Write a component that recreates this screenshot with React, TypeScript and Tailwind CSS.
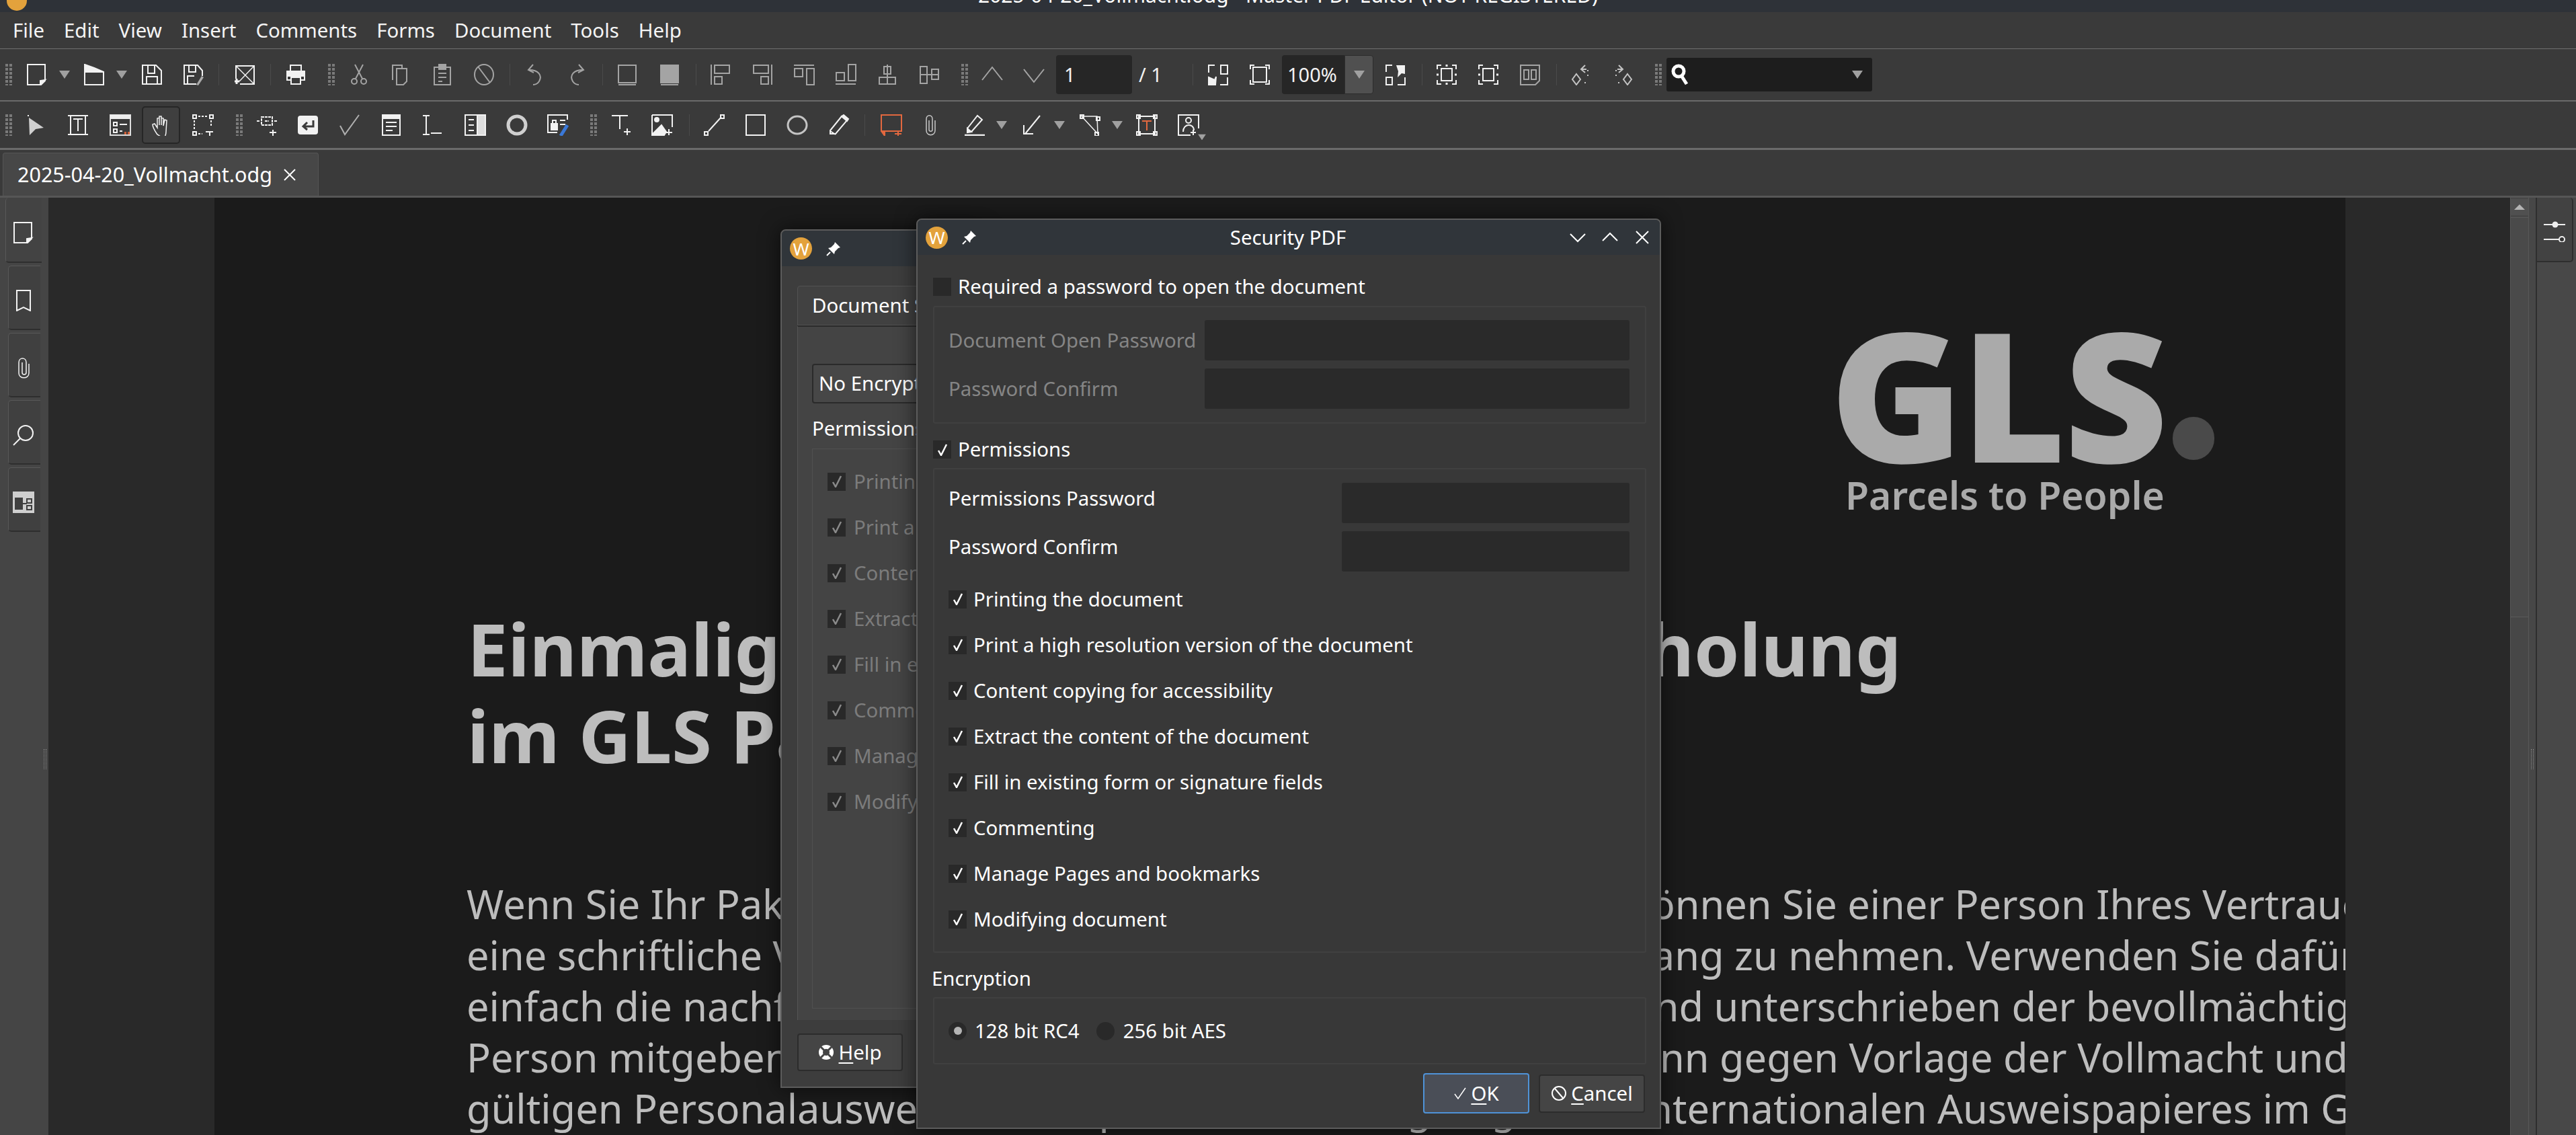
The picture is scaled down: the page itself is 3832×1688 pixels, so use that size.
import type { ReactNode } from "react";

const I = ({ className = "", children }: { className?: string; children: ReactNode }) => (
  <svg
    viewBox="0 0 32 32"
    fill="none"
    stroke="currentColor"
    strokeWidth="2"
    className={"w-8 h-8 shrink-0 " + className}
  >
    {children}
  </svg>
);

const Caret = ({ className = "" }: { className?: string }) => (
  <svg viewBox="0 0 16 12" className={"w-4 h-3 shrink-0 text-[#a0a0a0] " + className}>
    <path d="M0 0h16L8 12z" fill="currentColor" />
  </svg>
);

const Grip = ({ className = "" }: { className?: string }) => (
  <svg viewBox="0 0 10 32" className={"w-[10px] h-8 shrink-0 " + className}>
    <path d="M2 0v32M8 0v32" stroke="#7a7a7a" strokeWidth="4" strokeDasharray="4 2" />
  </svg>
);

const Sep = ({ className = "" }: { className?: string }) => (
  <div className={"w-px h-8 shrink-0 bg-[#4a4a4a] " + className} />
);

const WLogo = ({ className = "" }: { className?: string }) => (
  <div
    className={
      "w-[33px] h-[33px] rounded-full bg-[#e3a23c] flex items-center justify-center text-white text-[26px] leading-none shrink-0 " +
      className
    }
  >
    W
  </div>
);

const Pin = ({ className = "" }: { className?: string }) => (
  <svg viewBox="0 0 24 24" className={"w-6 h-6 shrink-0 text-white " + className}>
    <path d="M14 2l8 8-3 1-5 5-1 4-9-9 4-1 5-5z" fill="currentColor" />
    <path d="M7 17l-5 5" stroke="currentColor" strokeWidth="2" />
  </svg>
);

const CheckBox = ({ checked = false, dim = false }: { checked?: boolean; dim?: boolean }) => (
  <div className="w-[27px] h-[27px] bg-[#292929] flex items-center justify-center shrink-0">
    {checked && (
      <svg viewBox="0 0 16 18" className={dim ? "w-4 h-[18px] text-[#8a8a8a]" : "w-4 h-[18px] text-white"}>
        <path d="M2 10l4 7L14 1" fill="none" stroke="currentColor" strokeWidth="2.5" />
      </svg>
    )}
  </div>
);

const CheckRow = ({ label }: { label: string }) => (
  <div className="h-[68px] flex items-center gap-[10px]">
    <CheckBox checked />
    <span>{label}</span>
  </div>
);

const BackRow = ({ label }: { label: string }) => (
  <div className="h-[68px] flex items-center gap-[12px] text-[#7c7c7c] whitespace-nowrap">
    <CheckBox checked dim />
    <span>{label}</span>
  </div>
);

const Input = ({ className = "" }: { className?: string }) => (
  <div className={"h-[60px] bg-[#2a2a2a] rounded-[3px] " + className} />
);

// left part runs under the dialogs, right part comes out on the other side
const pageLines = [
  { left: "Wenn Sie Ihr Paket nicht persönlich abholen können,", right: "können Sie einer Person Ihres Vertrauens", cls: "ml-[630px]" },
  { left: "eine schriftliche Vollmacht erteilen, das Paket in", right: "Empfang zu nehmen. Verwenden Sie dafür", cls: "ml-[518px]" },
  { left: "einfach die nachfolgende Vorlage, die Sie ausfüllen", right: "und unterschrieben der bevollmächtigten", cls: "ml-[630px]" },
  { left: "Person mitgeben. Diese erhält das Paket", right: "dann gegen Vorlage der Vollmacht und", cls: "ml-[605px]" },
  { left: "gültigen Personalausweises Reisepasses oder mit gültigem", right: "internationalen Ausweispapieres im GLS", cls: "ml-[642px]" },
];

const permissions = [
  "Printing the document",
  "Print a high resolution version of the document",
  "Content copying for accessibility",
  "Extract the content of the document",
  "Fill in existing form or signature fields",
  "Commenting",
  "Manage Pages and bookmarks",
  "Modifying document",
];

const ToolbarOne = () => (
  <div className="h-[78px] flex items-center pl-2 text-[#f2f2f2] border-b-2 border-[#6b6b6b] bg-[#3a3a3a]">
    <Grip />
    <I className="ml-5"><path d="M3 1h26v24l-6 6H3z" /><path d="M29 24l-7 1v6z" fill="currentColor" /></I>
    <Caret className="ml-[18px]" />
    <I className="ml-5"><path d="M2 31V12h28v19z" /><path d="M2 1l14 5 14 6H2z" fill="currentColor" /></I>
    <Caret className="ml-[17px]" />
    <I className="ml-[21px]"><path d="M2 2h20l8 8v20H2z" /><path d="M10 2v12h10V2M8 30V19h16v11" /></I>
    <I className="ml-[30px]"><path d="M20 30H2V2h20l7 8v8" /><path d="M9 2v10h10V2M7 30V18h10" /><path d="M20 31l8-13 3 2-8 12z" fill="#aaa" stroke="none" /></I>
    <Sep className="ml-[21px]" />
    <I className="ml-[22px]"><path d="M3 22V3h27v27H9" /><path d="M3 3l27 27M30 3L8 26" strokeWidth="1.5" /><path d="M1 26h7M4 22v8" strokeWidth="3" /></I>
    <Sep className="ml-[22px]" />
    <I className="ml-[21px]"><path d="M8 11V2h16v9M8 24H3V11h26v13h-5" fill="none" /><path d="M3 12h26v6H3z" fill="currentColor" /><path d="M9 20h14v10H9z" /></I>
    <Grip className="ml-8" />
    <div className="flex items-center text-[#a4a4a4]">
      <I className="ml-5"><circle cx="9" cy="26" r="4" /><circle cx="23" cy="26" r="4" /><path d="M11 22L22 1M21 22L10 1" /></I>
      <I className="ml-[29px]"><path d="M5 24V2h14v5" /><path d="M11 7h15v19l-5 5H11z" /></I>
      <I className="ml-[31px]"><path d="M4 5h24v26H4z" /><path d="M11 1h10v7H11z" fill="currentColor" /><path d="M10 14h12M10 20h12M10 26h6" /></I>
      <I className="ml-[30px]"><ellipse cx="16" cy="16" rx="14" ry="15" /><path d="M7 4l18 24" /></I>
      <Sep className="ml-[22px]" />
      <I className="ml-[21px]"><path d="M13 1L6 9l8 4" /><path d="M7 9c14 0 20 8 15 17-2 3-5 5-9 5" /></I>
      <I className="ml-[30px]"><path d="M19 1l7 8-8 4" /><path d="M25 9c-14 0-20 8-15 17 2 3 5 5 9 5" /></I>
      <Sep className="ml-[22px]" />
      <I className="ml-5"><path d="M3 2h26v26H3zM3 31h26" /></I>
      <I className="ml-[31px]"><path d="M3 2h26v26H3z" fill="currentColor" /><path d="M3 31h26" /></I>
      <Sep className="ml-[23px]" />
      <I className="ml-5"><path d="M2 1v30M7 2h22v12H7zM7 19h11v11H7z" /></I>
      <I className="ml-[30px]"><path d="M30 1v30M3 2h22v12H3zM14 19h11v11H14z" /></I>
      <I className="ml-[30px]"><path d="M1 2h30M2 7h12v12H2zM20 7h11v24H20z" /></I>
      <I className="ml-[30px]"><path d="M1 30h30M2 13h12v12H2zM20 1h11v24H20z" /></I>
      <I className="ml-[30px]"><path d="M16 1v30M11 4h10v11H11zM4 20h24v10H4z" /></I>
      <I className="ml-[30px]"><path d="M2 16h28M3 4h10v25H3zM20 8h10v15H20z" /></I>
      <Grip className="ml-8" />
      <I className="ml-5"><path d="M1 24L16 5l15 19" /></I>
      <I className="ml-[30px]"><path d="M1 8l15 19L31 8" /></I>
    </div>
    <div className="ml-[17px] w-[113px] h-[58px] rounded-[4px] bg-[#262626] flex items-center pl-[12px] text-[29px]">1</div>
    <span className="ml-[10px] w-[33px] text-[29px] whitespace-nowrap">/ 1</span>
    <Sep className="ml-[47px]" />
    <I className="ml-[21px]"><path d="M2 13V2h9M30 20v11H19" /><path d="M20 2h10v13H20z" /><path d="M2 20l9 4 2-5-1 12H2z" fill="currentColor" /></I>
    <I className="ml-[30px]"><path d="M2 8V2h6M24 2h6v6M2 24v6h6M24 30h6v-6M6 5h20v22H6z" /></I>
    <div className="ml-[17px] flex h-[58px]">
      <div className="w-[93px] bg-[#262626] rounded-l-[4px] flex items-center pl-2 text-[29px]">100%</div>
      <div className="w-[43px] bg-[#505050] border border-[#2c2c2c] rounded-r-[4px] flex items-center justify-center">
        <Caret />
      </div>
    </div>
    <I className="ml-[17px]"><path d="M2 12V2h9M30 20v11H19" /><path d="M2 20h9v11H2z" /><path d="M17 2h13v13l-5-1-6 6 1-9z" fill="currentColor" stroke="none" /></I>
    <Sep className="ml-[23px]" />
    <I className="ml-5"><path d="M2 8V2h6M24 2h6v6M2 24v6h6M24 30h6v-6M8 7h16v18H8z" /><path d="M16 1v3M16 28v3M1 16h3M28 16h3" strokeWidth="3" /></I>
    <I className="ml-[30px]"><path d="M2 8V2h6M24 2h6v6M2 24v6h6M24 30h6v-6M8 7h16v18H8z" /><path d="M1 16h3M28 16h3" strokeWidth="3" /></I>
    <I className="ml-[30px] text-[#a4a4a4]"><path d="M2 2h28v23l-6 6H2z" /><path d="M7 9h7v14H7zM18 9h7v14h-7z" /></I>
    <Sep className="ml-[23px]" />
    <div className="flex items-center text-[#c4c4c4]">
      <I className="ml-5"><path d="M9 15l6 8-6 8-6-8z" /><path d="M22 2l-6 6 6 5M16 8h8" /><path d="M26 9v14M23 28h-5" strokeDasharray="2 5" /></I>
      <I className="ml-[30px]"><path d="M23 15l6 8-6 8-6-8z" /><path d="M10 2l6 6-6 5M16 8H8" /><path d="M6 9v14M9 28h5" strokeDasharray="2 5" /></I>
    </div>
    <Grip className="ml-8" />
    <div className="ml-[7px] w-[306px] h-[50px] rounded-[3px] bg-[#1d1d1d] flex items-center pl-[6px] pr-[14px] justify-between">
      <svg viewBox="0 0 28 32" className="w-[28px] h-8 text-white">
        <circle cx="12" cy="11" r="8" fill="none" stroke="currentColor" strokeWidth="5" />
        <path d="M17 19l7 11" stroke="currentColor" strokeWidth="5" />
      </svg>
      <Caret />
    </div>
  </div>
);

const ToolbarTwo = () => (
  <div className="h-[72px] flex items-center pl-2 text-[#f2f2f2] border-b-[3px] border-[#6b6b6b] bg-[#3a3a3a]">
    <Grip />
    <I className="ml-5"><path d="M4 1v2" /><path d="M5 5l22 15-12 2-9 9z" fill="#cfcfcf" stroke="none" /></I>
    <I className="ml-[30px]"><path d="M1 2h30M1 30h30M5 2v28M27 2v28M9 7h14M16 7v18" /></I>
    <I className="ml-[31px]"><path d="M1 1h30v30H1z" fill="none" stroke="#ddd" /><path d="M1 1h30v6H1z" fill="#eee" stroke="none" /><path d="M6 12h5v5H6zM6 22h5v5H6zM15 15h11M15 25h4" /><path d="M22 28h3M27 28h3" stroke="#d0623a" strokeWidth="4" /></I>
    <div className="ml-4 w-[57px] h-[56px] rounded-[5px] bg-[#3f3f3f] border-2 border-[#262626] flex items-center justify-center">
      <I><path d="M10 30C6 24 3 20 3 15l3-1 4 6V6l3-1v11-13l3 0v13-11l3 1v11l2-9 3 1-1 17c0 5-2 8-3 10z" strokeWidth="1.5" /></I>
    </div>
    <I className="ml-[18px]"><path d="M1 1h5v5H1zM26 1h5v5h-5zM1 26h5v5H1z" /><path d="M9 3h14M3 9v14M28 9v10M9 29h6" strokeDasharray="3 2" /><path d="M20 26h11M26 26v6" /></I>
    <Grip className="ml-[33px]" />
    <I className="ml-5"><path d="M1 10h4M27 10h4M8 4h16v12H8zM13 10h6" strokeDasharray="4 1" /><path d="M25 23v9M20 27h10" /></I>
    <I className="ml-[29px]"><rect x="1" y="2" width="30" height="28" rx="4" fill="#f2f2f2" stroke="none" /><path d="M24 9v9H10M15 12l-6 6 6 5" stroke="#3a3a3a" strokeWidth="3" /></I>
    <I className="ml-[30px] text-[#b0b0b0]"><path d="M2 17l7 13L30 1" /></I>
    <I className="ml-[30px]"><path d="M3 1h26v30H3z" /><path d="M3 1h26v5H3z" fill="currentColor" /><path d="M8 12h16M8 18h16M8 24h10" /></I>
    <I className="ml-[29px]"><path d="M2 2h10M7 2v28M2 30h10M14 28h16" strokeWidth="2" /></I>
    <I className="ml-8"><path d="M1 1h30v30H1z" /><path d="M19 1h12v30H19z" fill="#ddd" /><path d="M6 8h8M6 16h8M6 24h8" /></I>
    <I className="ml-[30px] text-[#cfcfcf]"><circle cx="16" cy="16" r="13" strokeWidth="5" /></I>
    <I className="ml-[29px]"><path d="M30 8V1H1v26h14" /><path d="M6 14h9v9H6z" fill="currentColor" /><path d="M8 13V9h5v4M19 9h8M19 15h8" /><path d="M20 32l10-16" stroke="#3a78d8" strokeWidth="5" /></I>
    <Grip className="ml-8" />
    <I className="ml-5"><path d="M2 2h24M14 2v20M20 26h10M25 21v10" /></I>
    <I className="ml-[29px]"><path d="M1 1h30v18M1 1v30h18" /><circle cx="8" cy="8" r="3" fill="currentColor" /><path d="M1 30l14-14 7 10-3 5z" fill="currentColor" /><path d="M26 22v9M21 27h10" /></I>
    <Sep className="ml-6" />
    <I className="ml-5"><path d="M8 25L27 4" /><path d="M2 26h5v5H2zM26 1h5v5h-5z" /></I>
    <I className="ml-[30px]"><path d="M2 1h28v30H2z" /></I>
    <I className="ml-[30px] text-[#c4c4c4]"><ellipse cx="16" cy="16" rx="14" ry="13" strokeWidth="3" /></I>
    <I className="ml-[30px]"><path d="M3 24L20 3l8 6-17 20H3z" /><path d="M20 3l3-2 7 6-2 3z" fill="currentColor" /><path d="M3 25l8 5" /></I>
    <Sep className="ml-[22px]" />
    <I className="ml-[23px] text-[#e2683f]"><path d="M1 1h30v24H1z" /><path d="M1 25h5v7z" fill="currentColor" /><path d="M26 25v7M21 29h10" /></I>
    <I className="ml-[27px] text-[#c8c8c8]"><path d="M22 9v15c0 9-13 9-13 0V7c0-7 9-7 9 0v16c0 3-5 3-5 0V9" strokeWidth="1.5" /></I>
    <I className="ml-[33px]"><path d="M5 21L20 2l7 6-16 18H5z" /><path d="M5 21l6 5-6 1z" fill="currentColor" /><path d="M1 31h30" strokeWidth="2.5" /></I>
    <Caret className="ml-4" />
    <I className="ml-5"><path d="M29 2L7 29M5 16v13h14" /></I>
    <Caret className="ml-[18px]" />
    <I className="ml-[22px]"><path d="M3 3h23l1 26zM3 3l24 26" strokeWidth="1.5" /><path d="M1 1h5v5H1zM25 4h5v5h-5zM23 27h5v5h-5z" /></I>
    <Caret className="ml-4" />
    <I className="ml-5"><path d="M3 3h26M3 29h26M4 3v26M28 3v26" /><path d="M1 1h5v5H1zM26 1h5v5h-5zM1 26h5v5H1zM26 26h5v5h-5z" /><path d="M9 10h14M16 10v14" stroke="#e2683f" /></I>
    <div className="ml-[30px] relative w-8 h-8 shrink-0">
      <I><path d="M19 31H1V1h30v20" /><circle cx="16" cy="9" r="4" /><path d="M8 26c0-13 16-13 16-2" /><path d="M23 23v8M19 27h8" /></I>
      <Caret className="absolute -right-[12px] -bottom-[8px] scale-75" />
    </div>
  </div>
);

const BackDialog = () => (
  <div className="absolute left-[1161px] top-[341px] w-[300px] h-[1277px] bg-[#3d3d3d] border-2 border-[#5c5c5c] rounded-t-[8px] overflow-hidden text-[29.4px] text-white shadow-[0_0_30px_rgba(0,0,0,0.6)]">
    <div className="h-[53px] bg-[#30353a] flex items-center pl-[12px] gap-[20px]">
      <WLogo />
      <Pin />
    </div>
    <div className="pl-[23px]">
      <div className="mt-[29px] h-[59px] w-[400px] bg-[#414141] border border-[#525252] rounded-t-[4px] flex items-center pl-[21px]">
        Document Security
      </div>
      <div className="h-[1033px] w-[400px] bg-[#444444] border-t-2 border-[#2a2a2a] border-l border-l-[#555555] pl-[21px] pt-[55px]">
        <div className="h-[59px] bg-[#474747] border-2 border-[#2a2a2a] rounded-[4px] flex items-center pl-[8px] whitespace-nowrap">
          No Encryption
        </div>
        <div className="mt-[15px] whitespace-nowrap">Permissions</div>
        <div className="mt-[8px] h-[833px] border border-[#505050] pl-[22px] pt-[14px]">
          {permissions.map((p) => (
            <BackRow key={p} label={p} />
          ))}
        </div>
      </div>
      <div className="mt-[20px] w-[157px] h-[56px] bg-[#454545] border-2 border-[#2c2c2c] rounded-[4px] flex items-center justify-center gap-[6px]">
        <svg viewBox="0 0 24 24" className="w-6 h-6">
          <circle cx="12" cy="12" r="11" fill="#ffffff" />
          <path d="M4 4l16 16M20 4L4 20" stroke="#454545" strokeWidth="3" />
          <circle cx="12" cy="12" r="5" fill="#454545" />
        </svg>
        <span>
          <span className="underline underline-offset-4">H</span>elp
        </span>
      </div>
    </div>
  </div>
);

const MainDialog = () => (
  <div className="absolute left-[1363px] top-[325px] w-[1108px] h-[1354px] bg-[#383838] border-2 border-[#5c5c5c] rounded-t-[8px] text-[29.4px] text-white shadow-[0_0_30px_rgba(0,0,0,0.6)]">
    <div className="h-[52px] bg-[#30353a] rounded-t-[6px] grid grid-cols-[1fr_auto_1fr] items-center pl-[12px] pr-[14px]">
      <div className="flex items-center gap-[20px]">
        <WLogo />
        <Pin />
      </div>
      <div>Security PDF</div>
      <div className="flex items-center justify-end gap-[24px]">
        <svg viewBox="0 0 24 24" className="w-6 h-6" fill="none" stroke="currentColor" strokeWidth="2"><path d="M1 7l11 11L23 7" /></svg>
        <svg viewBox="0 0 24 24" className="w-6 h-6" fill="none" stroke="currentColor" strokeWidth="2"><path d="M1 17L12 6l11 11" /></svg>
        <svg viewBox="0 0 24 24" className="w-6 h-6" fill="none" stroke="currentColor" strokeWidth="2"><path d="M3 3l18 18M21 3L3 21" /></svg>
      </div>
    </div>
    <div className="pl-[23px] pr-5">
      <div className="mt-[34px] h-[27px] flex items-center gap-[10px]">
        <CheckBox />
        <span>Required a password to open the document</span>
      </div>
      <div className="mt-[15px] h-[175px] border-2 border-[#404040] rounded-[3px] pl-[21px] pr-[23px] pt-[19px] grid grid-cols-[381px_1fr] gap-y-[12px] content-start text-[#858585]">
        <div className="h-[60px] flex items-center whitespace-nowrap">Document Open Password</div>
        <Input />
        <div className="h-[60px] flex items-center">Password Confirm</div>
        <Input />
      </div>
      <div className="mt-[25px] h-[27px] flex items-center gap-[10px]">
        <CheckBox checked />
        <span>Permissions</span>
      </div>
      <div className="mt-[14px] h-[721px] border-2 border-[#404040] rounded-[3px] pl-[21px] pr-[23px] pt-[20px]">
        <div className="grid grid-cols-[585px_1fr] gap-y-[12px]">
          <div className="h-[60px] flex items-center pb-[14px]">Permissions Password</div>
          <Input />
          <div className="h-[60px] flex items-center pb-[14px]">Password Confirm</div>
          <Input />
        </div>
        <div className="mt-[7px]">
          {permissions.map((p) => (
            <CheckRow key={p} label={p} />
          ))}
        </div>
      </div>
      <div className="mt-[18px] -ml-[2px] h-[40px] flex items-center">Encryption</div>
      <div className="mt-2 h-[100px] border-2 border-[#404040] rounded-[3px] pl-[21px] flex items-center">
        <div className="w-[27px] h-[27px] rounded-full bg-[#292929] flex items-center justify-center">
          <div className="w-[12px] h-[12px] rounded-full bg-[#b4b4b4]" />
        </div>
        <span className="ml-[12px]">128 bit RC4</span>
        <div className="ml-[25px] w-[27px] h-[27px] rounded-full bg-[#292929]" />
        <span className="ml-[13px]">256 bit AES</span>
      </div>
      <div className="mt-[13px] mr-[2px] flex justify-end items-center gap-[14px]">
        <div className="w-[158px] h-[60px] bg-[#4a4e57] border-2 border-[#4f93d8] rounded-[4px] flex items-center justify-center gap-[6px]">
          <svg viewBox="0 0 20 20" className="w-5 h-5" fill="none" stroke="currentColor" strokeWidth="1.5"><path d="M2 11l5 7L18 2" /></svg>
          <span><span className="underline underline-offset-4">O</span>K</span>
        </div>
        <div className="w-[158px] h-[57px] bg-[#454545] border-2 border-[#2c2c2c] rounded-[4px] flex items-center justify-center gap-[6px]">
          <svg viewBox="0 0 24 24" className="w-6 h-6" fill="none" stroke="currentColor" strokeWidth="2"><circle cx="12" cy="12" r="10" /><path d="M6 5l12 14" /></svg>
          <span><span className="underline underline-offset-4">C</span>ancel</span>
        </div>
      </div>
    </div>
  </div>
);

const SideTab = ({ first = false, children }: { first?: boolean; children: ReactNode }) => (
  <div
    className={
      first
        ? "w-[54px] h-[97px] ml-2 pt-2 pr-1 bg-[#434343] border-l border-[#585858] border-b-2 border-b-[#2e2e2e] rounded-l-[5px] flex items-center justify-center text-[#f2f2f2]"
        : "w-[48px] h-[96px] ml-3 mt-1 pt-2 pr-1 bg-[#404040] border-l border-t border-[#585858] border-b-2 border-b-[#2e2e2e] rounded-l-[5px] flex items-center justify-center text-[#f2f2f2]"
    }
  >
    {children}
  </div>
);

export default function App() {
  return (
    <div className="relative w-[3832px] h-[1688px] overflow-hidden bg-[#3a3a3a] font-['Noto_Sans',sans-serif] text-white flex flex-col">
      <div className="h-[18px] bg-[#2e3238] shrink-0 relative overflow-hidden flex justify-center items-end">
        <div className="absolute left-[10px] -top-[14px] w-[30px] h-[30px] rounded-full bg-[#e3a23c]" />
        <span className="text-[30px] leading-[30px] mb-[10px] whitespace-nowrap">
          2025-04-20_Vollmacht.odg - Master PDF Editor (NOT REGISTERED)
        </span>
      </div>
      <div className="h-[55px] shrink-0 flex items-center gap-[29px] pl-[19px] border-b border-[#6e6e6e] text-[29.4px] text-[#f4f4f4]">
        <span>File</span>
        <span>Edit</span>
        <span>View</span>
        <span>Insert</span>
        <span>Comments</span>
        <span>Forms</span>
        <span>Document</span>
        <span>Tools</span>
        <span>Help</span>
      </div>
      <ToolbarOne />
      <ToolbarTwo />
      <div className="h-[71px] shrink-0 flex items-end border-b-[3px] border-[#565656] pl-[4px]">
        <div className="w-[470px] h-[64px] bg-[#474747] border border-b-0 border-[#555555] rounded-t-[4px] flex items-center pl-[21px] text-[30.5px] whitespace-nowrap">
          2025-04-20_Vollmacht.odg
          <svg viewBox="0 0 20 20" className="ml-[16px] w-5 h-5" fill="none" stroke="currentColor" strokeWidth="2"><path d="M2 2l16 16M18 2L2 18" /></svg>
        </div>
      </div>
      <div className="flex-1 flex min-h-0">
        <div className="w-[72px] shrink-0 bg-[#454545] flex">
          <div className="w-[62px]">
            <SideTab first>
              <I><path d="M3 1h26v24l-6 6H3z" /><path d="M29 24l-7 1v6z" fill="currentColor" /></I>
            </SideTab>
            <SideTab>
              <I><path d="M6 1h20v30l-10-5-10 5z" /></I>
            </SideTab>
            <SideTab>
              <I><path d="M24 10v14c0 9-15 9-15 0V8c0-8 11-8 11 0v15c0 4-6 4-6 0V8" strokeWidth="1.5" /></I>
            </SideTab>
            <SideTab>
              <I><circle cx="19" cy="13" r="11" /><path d="M11 21L1 31" /></I>
            </SideTab>
            <SideTab>
              <svg viewBox="0 0 32 32" className="w-8 h-8">
                <path d="M0 0h32v32H0z" fill="#cfcfcf" />
                <path d="M3 9h12v18H3z" fill="#404040" />
                <path d="M15 18h6" stroke="#404040" strokeWidth="2" />
                <path d="M21 11h7v6h-7zM21 21h7v6h-7z" fill="none" stroke="#404040" strokeWidth="2" />
              </svg>
            </SideTab>
          </div>
          <div className="w-[10px] pt-[820px] flex justify-center">
            <div className="w-[4px] h-[30px] border-x border-dotted border-[#8a8a8a]" />
          </div>
        </div>
        <div className="w-[3662px] shrink-0 bg-[#292929] pl-[247px] overflow-hidden">
          <div className="w-[3170px] h-full bg-[#1b1b1b] overflow-hidden flex flex-col text-[#bdbdbd]">
            <div className="self-end mr-[190px] mt-[192px] w-[577px]">
              <div className="flex items-end h-[198px]">
                <span className="text-[268px] leading-[198px] font-black tracking-[-3px] text-[#aaaaaa]">GLS</span>
                <div className="ml-[10px] w-[62px] h-[64px] shrink-0 rounded-full bg-[#4a4a4a]" />
              </div>
              <div className="ml-[23px] mt-[17px] text-[57px] leading-[70px] font-semibold text-[#aaaaaa] whitespace-nowrap">
                Parcels to People
              </div>
            </div>
            <div className="ml-[376px] mt-[129px] text-[108px] leading-[129px] font-bold whitespace-nowrap">
              <div>
                <span>Einmalige Vollmacht zur</span>
                <span className="ml-[311px]">Abholung</span>
              </div>
              <div>im GLS PaketShop</div>
            </div>
            <div className="ml-[375px] mt-[148px] text-[59.5px] leading-[76px] whitespace-nowrap">
              {pageLines.map((l) => (
                <div key={l.left} className="flex">
                  <span className="w-[1100px] shrink-0">{l.left}</span>
                  <span className={l.cls}>{l.right}</span>
                </div>
              ))}
            </div>
          </div>
        </div>
        <div className="w-[28px] shrink-0 bg-[#474747] border-x border-[#585858] flex flex-col">
          <div className="h-[24px] bg-[#505050] flex items-center justify-center mt-[2px]">
            <svg viewBox="0 0 16 8" className="w-4 h-2"><path d="M0 8L8 0l8 8z" fill="#b4b4b4" /></svg>
          </div>
          <div className="h-[595px] mt-[3px] bg-[#4a4a4a] border-y border-[#5a5a5a]" />
        </div>
        <div className="w-[10px] shrink-0 bg-[#474747] pt-[820px] flex justify-center">
          <div className="w-[4px] h-[30px] border-x border-dotted border-[#8a8a8a]" />
        </div>
        <div className="flex-1 bg-[#484848] border-l-2 border-[#2e2e2e]">
          <div className="w-[54px] h-[96px] pt-[6px] bg-[#424242] border-b-2 border-r-2 border-[#2e2e2e] rounded-r-[5px] flex items-center justify-center">
            <svg viewBox="0 0 34 32" className="w-[34px] h-8" fill="none" stroke="#eeeeee" strokeWidth="2">
              <path d="M1 6h32M1 28h24" />
              <circle cx="18" cy="6" r="4.5" fill="#eeeeee" stroke="none" />
              <circle cx="28" cy="28" r="4" fill="#333333" />
            </svg>
          </div>
        </div>
      </div>
      <BackDialog />
      <MainDialog />
    </div>
  );
}
